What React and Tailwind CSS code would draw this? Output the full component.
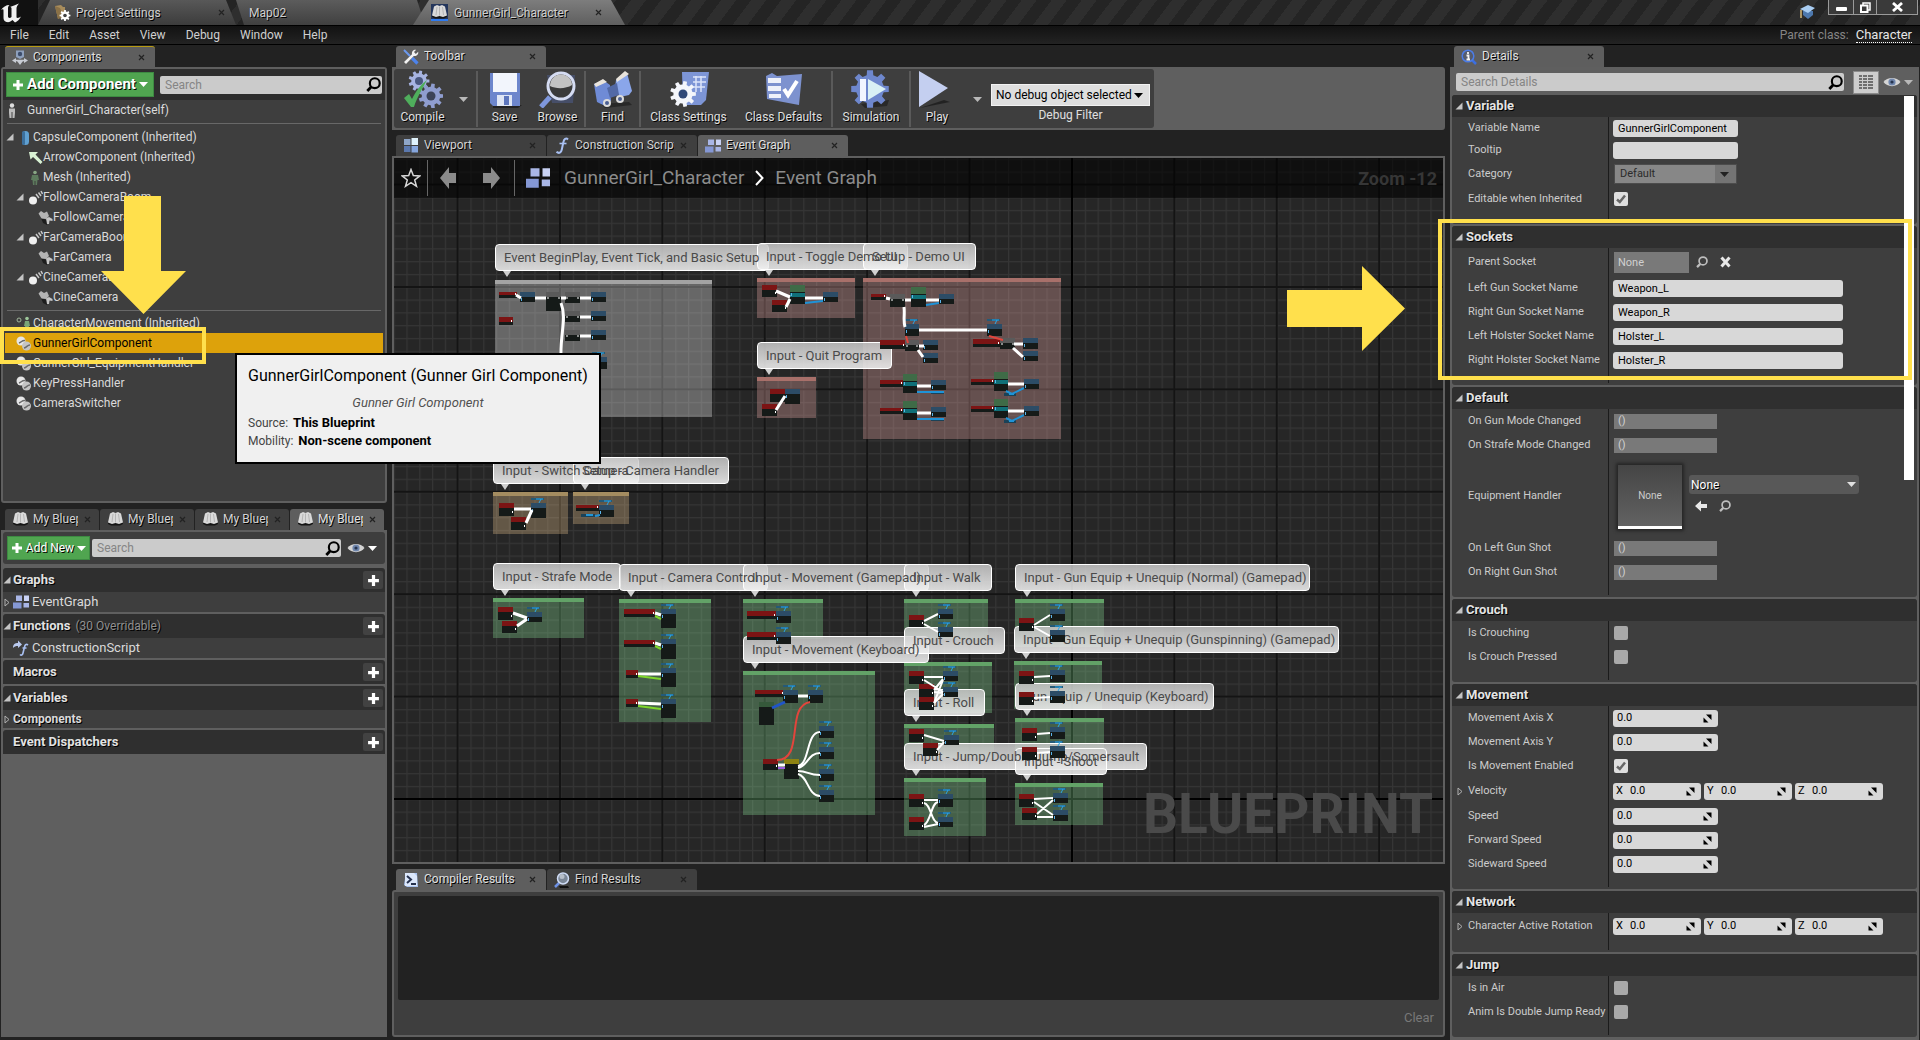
import React from "react";

/* ---------- shared bits ---------- */

const shadow = "[text-shadow:1px_1px_0_#000]";

function gearPath(cx, cy, r, teeth) {
  const pts = [];
  for (let i = 0; i < teeth; i++) {
    const a = (i / teeth) * Math.PI * 2;
    const s = (Math.PI * 2) / teeth;
    [[-0.3, 0.74], [-0.2, 1], [0.2, 1], [0.3, 0.74]].forEach(([o, k]) => {
      pts.push(`${(cx + Math.cos(a + o * s) * r * k).toFixed(2)} ${(cy + Math.sin(a + o * s) * r * k).toFixed(2)}`);
    });
  }
  return `M${pts.join("L")}Z`;
}

function Down({ className = "fill-white" }) {
  return (
    <svg width="9" height="5" viewBox="0 0 9 5" className={`shrink-0 ${className}`} aria-hidden="true">
      <path d="M0 0H9L4.5 5Z" />
    </svg>
  );
}

function Caret({ open }) {
  return open ? (
    <svg width="8" height="8" viewBox="0 0 8 8" className="shrink-0" aria-hidden="true">
      <path d="M7.5 0.5V7.5H0.5Z" fill="#c4c4c4" />
    </svg>
  ) : (
    <svg width="6" height="9" viewBox="0 0 6 9" className="shrink-0" aria-hidden="true">
      <path d="M1 1V8L5 4.500Z" fill="none" stroke="#b0b0b0" />
    </svg>
  );
}

function Magnifier({ size = 14, className = "stroke-black" }) {
  return (
    <svg width={size} height={size} viewBox="0 0 14 14" className={`shrink-0 ${className}`} fill="none" aria-hidden="true">
      <circle cx="8.200" cy="5.800" r="4.600" strokeWidth="2" />
      <path d="M5 9.200L1.200 13" strokeWidth="2.600" />
    </svg>
  );
}

function CloseX() {
  return (
    <button type="button" aria-label="Close tab" className="flex size-[9px] shrink-0 items-center justify-center">
      <svg width="7" height="7" viewBox="0 0 7 7" aria-hidden="true">
        <path d="M1 1L6 6M6 1L1 6" stroke="#222" strokeWidth="1.200" />
      </svg>
    </button>
  );
}

function Plus({ size = 12 }) {
  return (
    <svg width={size} height={size} viewBox="0 0 12 12" className="shrink-0" aria-hidden="true">
      <path d="M4.500 1H7.500V4.500H11V7.500H7.500V11H4.500V7.500H1V4.500H4.500Z" fill="#fff" />
    </svg>
  );
}

function Eye() {
  return (
    <svg width="18" height="12" viewBox="0 0 18 12" className="shrink-0" aria-hidden="true">
      <path d="M0.500 6C4 0.500 14 0.500 17.500 6C14 11.500 4 11.500 0.500 6Z" fill="#d4d4d4" />
      <circle cx="9" cy="6" r="3.600" fill="#6f86ad" />
      <circle cx="9" cy="6" r="1.600" fill="#26344f" />
    </svg>
  );
}

function BookIcon({ boxed }) {
  return (
    <svg width="17" height="17" viewBox="0 0 17 17" className="shrink-0" aria-hidden="true">
      {boxed && <path d="M0 0H17V17H0Z" fill="#24365c" />}
      {boxed && <path d="M0 15H17V17H0Z" fill="#2f7bf0" />}
      <path d="M1 13L4 14.500H13L16 13V11H1Z" fill="#151515" />
      <path d="M3 2.500L6 1L8.500 2L11 1L14 2.500L16 11.500L12 13L8.500 12L5 13L1 11.500Z" fill="#d9d9d9" />
      <path d="M8.500 2.500V11.500M6 3L5 11M11.500 3L12.500 11" stroke="#a5a5a5" strokeWidth="0.700" fill="none" />
    </svg>
  );
}

function GraphIcon({ size = 16 }) {
  return (
    <svg width={size} height={size} viewBox="0 0 16 16" className="shrink-0" aria-hidden="true">
      <path d="M3 1.500H9V7H3Z" fill="#a9b6e6" />
      <path d="M11 1.500H16V7H11Z" fill="#c9d2f4" />
      <path d="M0 8.500H8.500V14.500H0Z" fill="#8497d4" />
      <path d="M10.500 9H16V13.500H10.500Z" fill="#a9b6e6" />
    </svg>
  );
}

function ViewportIcon() {
  return (
    <svg width="14" height="15" viewBox="0 0 14 15" className="shrink-0" aria-hidden="true">
      <path d="M0 1H6.500V7H0Z" fill="#8fa6c8" />
      <path d="M7.500 0H14V7H7.500Z" fill="#dff2fb" />
      <path d="M0 8H6.500V14H0Z" fill="#5b78ad" />
      <path d="M7.500 8H14V14.500H7.500Z" fill="#86a6dd" />
    </svg>
  );
}

function FnIcon() {
  return (
    <svg width="14" height="17" viewBox="0 0 14 17" className="shrink-0" aria-hidden="true">
      <path d="M13 2.500C11 0.500 9 2 8.300 5.500L6.800 12.500C6.300 15.500 4 17 1.500 14.800" fill="none" stroke="#a9c0f2" strokeWidth="2" />
      <path d="M4.500 6.500H11.500" stroke="#a9c0f2" strokeWidth="1.600" />
    </svg>
  );
}

function WrenchIcon() {
  return (
    <svg width="16" height="16" viewBox="0 0 16 16" className="shrink-0" aria-hidden="true">
      <path d="M1 1L7 7" stroke="#6c9af0" strokeWidth="2" />
      <path d="M9 9L14.500 14.500" stroke="#4d83ea" strokeWidth="3.200" />
      <path d="M1 13L9 5.200C8.500 2.500 10.500 0.300 13.200 0.800L11 3L12.800 5L15.200 2.800C15.700 5.500 13.500 7.500 10.800 7L3 15Z" fill="#f2f2f2" />
    </svg>
  );
}

function ComponentsIcon() {
  return (
    <svg width="16" height="15" viewBox="0 0 16 15" className="shrink-0" aria-hidden="true">
      <path d="M4 0.500H12V7L8 9L4 7Z" fill="#8ea0bd" />
      <circle cx="8" cy="4" r="2.200" fill="#3d4d6c" />
      <path d="M0 10.500L4 8V13ZM16 10.500L12 8V13ZM8 15L5 11H11Z" fill="#c8ccd4" />
      <path d="M3 10.500H13" stroke="#c8ccd4" strokeWidth="1.500" />
    </svg>
  );
}

/* ---------- title and menu bars ---------- */

function TitleBar() {
  return (
    <header className="flex h-[25px] shrink-0 items-stretch bg-[repeating-linear-gradient(127deg,#2e2e2e_0px,#2e2e2e_12px,#242424_12px,#242424_24px)] text-[12px] text-[#cfcfcf]">
      <div className="flex w-[38px] items-center bg-[#111]">
        <svg width="24" height="22" viewBox="0 0 24 22" aria-label="Unreal Engine" role="img">
          <path d="M1 8C3 5 6 3 9.500 3C8 4.500 8 5.500 8 7V14.500C8 16 10 16.500 11.500 15V6.500C11.500 5.500 11 5 10 5C12.500 4 15.500 3 19 1.500C17.500 3.500 16.500 4.500 16.500 6.500V15.500C17.500 16.500 19.500 15.500 21 14.500C19.500 17.500 17.500 19.500 15 20.500L12.500 18C11 19.500 9 20.500 6.500 20C4 19.500 3.500 17.500 3.500 15.500V8.500C3.500 7 2.500 7 1 8Z" fill="#f0f0f0" />
        </svg>
      </div>
      <nav className="flex" aria-label="Documents">
        <div className="flex w-[198px] items-center bg-[linear-gradient(#585858,#3c3c3c)] pr-[10px] pl-[16px] [clip-path:polygon(12px_0,188px_0,198px_100%,0_100%)]">
          <svg width="17" height="17" viewBox="0 0 17 17" aria-hidden="true">
            <path d="M1 2L7 1L9 3L11 3V8L4 15Z" fill="#a98d5c" />
            <path d="M1 2L4 15L10 13L6 4Z" fill="#8a7147" />
            <path d={gearPath(11, 11.5, 5.5, 8)} fill="#fff" />
            <circle cx="11" cy="11.500" r="1.800" fill="#444" />
          </svg>
          <a href="#project" className={`ml-[5px] flex-1 ${shadow}`}>Project Settings</a>
          <CloseX />
        </div>
        <div className="-ml-[6px] flex w-[195px] items-center bg-[linear-gradient(#5c5c5c,#404040)] pl-[19px] [clip-path:polygon(6px_0,187px_0,195px_100%,14px_100%)]">
          <a href="#map" className={shadow}>Map02</a>
        </div>
        <div className="-ml-[12px] flex w-[212px] items-center bg-[linear-gradient(#7d7d7d,#5f5f5f)] pr-[22px] pl-[18px] [clip-path:polygon(16px_0,198px_0,212px_100%,0_100%)]">
          <BookIcon boxed />
          <a href="#character" className={`ml-[6px] flex-1 ${shadow}`}>GunnerGirl_Character</a>
          <CloseX />
        </div>
      </nav>
      <div className="ml-auto flex items-start">
        <svg width="18" height="16" viewBox="0 0 18 16" className="mt-[4px] mr-[11px]" aria-hidden="true">
          <path d="M4 7L4 11L9 15L14 11V7Z" fill="#4d78ad" />
          <path d="M1 5L9 1L16 4L9 9Z" fill="#a9cdf2" />
          <path d="M2 6V14" stroke="#d6b878" strokeWidth="1.500" />
        </svg>
        <button type="button" aria-label="Minimize" className="flex h-[15px] w-[26px] items-center justify-center border border-t-0 border-[#9a9a9a] bg-[#3a3a3a]">
          <span className="mt-[3px] block h-[4px] w-[11px] rounded-[1px] bg-white" />
        </button>
        <button type="button" aria-label="Restore" className="flex h-[15px] w-[23px] items-center justify-center border border-t-0 border-l-0 border-[#9a9a9a] bg-[#3a3a3a]">
          <svg width="11" height="11" viewBox="0 0 11 11" fill="none" stroke="#fff" aria-hidden="true">
            <path d="M3 3V1H10V8H8" strokeWidth="1.500" />
            <path d="M1 3.500H7.500V10H1Z" strokeWidth="2" />
          </svg>
        </button>
        <button type="button" aria-label="Close" className="mr-[2px] flex h-[15px] w-[41px] items-center justify-center border border-t-0 border-l-0 border-[#9a9a9a] bg-[#3a3a3a]">
          <svg width="11" height="10" viewBox="0 0 11 10" aria-hidden="true">
            <path d="M1 1L10 9M10 1L1 9" stroke="#fff" strokeWidth="2.800" />
          </svg>
        </button>
      </div>
    </header>
  );
}

function MenuBar() {
  return (
    <div className="flex h-[20px] shrink-0 items-center justify-between border-y border-black bg-[linear-gradient(#121212,#232323)] pr-[8px] pl-[10px] text-[12px] text-[#d0d0d0]">
      <nav className="flex gap-[20px]" aria-label="Main menu">
        {["File", "Edit", "Asset", "View", "Debug", "Window", "Help"].map((m) => (
          <button type="button" key={m}>{m}</button>
        ))}
      </nav>
      <p className="flex items-center gap-[7px] text-[#858585]">
        Parent class:
        <a href="#parent" className="border-b border-dotted border-white text-[13px] leading-[15px] text-[#e6e6e6]">Character</a>
      </p>
    </div>
  );
}

/* ---------- docked tabs ---------- */

function Tab({ icon, label, active, focus, className = "w-[150px] pr-[9px]" }) {
  return (
    <div
      className={`flex h-[21px] items-center gap-[5px] rounded-t-[3px] pl-[7px] text-[12px] ${className} ${
        active ? "bg-[#5e5e5e] text-[#e0e0e0]" : "bg-[#3f3f3f] text-[#d4d4d4]"
      } ${focus ? "border-t border-[#b79a12]" : ""}`}
    >
      <span className="flex w-[16px] shrink-0 justify-center">{icon}</span>
      <button type="button" className={`min-w-0 flex-1 overflow-hidden pb-px text-left leading-[18px] whitespace-nowrap ${shadow}`}>{label}</button>
      <CloseX />
    </div>
  );
}

function Search({ label, className }) {
  return (
    <label className={`flex h-[18px] items-center rounded-[2px] bg-[#cbcbcb] pr-px pl-[5px] ${className}`}>
      <input type="search" aria-label={label} placeholder={label} className="min-w-0 flex-1 bg-transparent text-[12px] leading-[18px] text-black placeholder-[#858585] outline-none" />
      <Magnifier size={15} />
    </label>
  );
}

/* ---------- component tree ---------- */

const treeIcons = {
  capsule: (
    <>
      <rect x="4" y="1" width="7" height="14" rx="3.500" fill="#5f9fd0" />
      <rect x="4" y="1" width="3" height="14" rx="1.500" fill="#3c6f9c" />
    </>
  ),
  arrow: <path d="M1 2L10 2L7.500 4.500L14.500 12L12.500 14L5 7L2.500 9.500Z" fill="#d9f2d4" />,
  mesh: (
    <>
      <circle cx="7" cy="2.500" r="1.800" fill="#88a684" />
      <path d="M4 5H10L11 10H9.500L9 15H7.500V11H6.500V15H5L4.500 10H3Z" fill="#5d7a5d" />
    </>
  ),
  boom: (
    <>
      <circle cx="5" cy="10.500" r="4" fill="#f0f0f0" />
      <path d="M8 4L11 8M10.500 2.500L13 6M13 1L14.500 4" stroke="#c8c8c8" strokeWidth="1.500" />
    </>
  ),
  camera: (
    <>
      <path d="M3 8L9 10V15L5 13Z" fill="#1d1d1d" />
      <path d="M0.500 3.500L3 1L6 3L9 1.500L11 6L8 9L3.500 8.500Z" fill="#b4b4b4" />
      <path d="M8 8.500L11 7L14.500 9V11L11.500 10.500L11 14H9L8.500 11Z" fill="#c6c6c6" />
    </>
  ),
  movement: (
    <>
      <circle cx="3" cy="4" r="2" fill="none" stroke="#9fb59a" />
      <circle cx="11" cy="2.500" r="1.800" fill="#9dc79a" />
      <path d="M9 5H13L14 10H13L12.500 14.500H9.500L9 10H8Z" fill="#79a577" />
    </>
  ),
  script: (
    <>
      <circle cx="5" cy="5" r="4.500" fill="#e6e6e6" />
      <circle cx="10.500" cy="10" r="4.500" fill="#c4c4c4" />
      <path d="M3 7C6 6 6 4 9 4.500M8 12C11 11.500 11 9 14 9" stroke="#6b6b6b" fill="none" strokeWidth="1.500" />
    </>
  ),
  self: (
    <>
      <circle cx="7" cy="2.500" r="2.200" fill="#ddd" />
      <path d="M4 5.500H10V10L9.500 15H4.500L4 10Z" fill="#bbb" />
      <path d="M7 9V15" stroke="#444" />
    </>
  ),
};

function TreeIcon({ name }) {
  return (
    <svg width="15" height="15" viewBox="0 0 15 15" className="shrink-0" aria-hidden="true">{treeIcons[name]}</svg>
  );
}

const tree = [
  ["capsule", "CapsuleComponent (Inherited)", "pl-[1px]", true],
  ["arrow", "ArrowComponent (Inherited)", "pl-[11px]", false],
  ["mesh", "Mesh (Inherited)", "pl-[11px]", false],
  ["boom", "FollowCameraBoom", "pl-[11px]", true],
  ["camera", "FollowCamera", "pl-[21px]", false],
  ["boom", "FarCameraBoom", "pl-[11px]", true],
  ["camera", "FarCamera", "pl-[21px]", false],
  ["boom", "CineCameraBoom", "pl-[11px]", true],
  ["camera", "CineCamera", "pl-[21px]", false],
];

const actors = [
  ["movement", "CharacterMovement (Inherited)"],
  ["script", "GunnerGirlComponent"],
  ["script", "GunnerGirl_EquipmentHandler"],
  ["script", "KeyPressHandler"],
  ["script", "CameraSwitcher"],
];

function ComponentsPanel() {
  return (
    <section className="relative flex flex-[457_1_0%] flex-col">
      <div className="flex pl-[4px]">
        <Tab active focus icon={<ComponentsIcon />} label="Components" />
      </div>
      <div className="flex flex-1 flex-col rounded-[3px] border-2 border-[#5f5f5f] bg-[#3e3e3e] text-[12px] text-[#dadada]">
        <div className="flex h-[31px] items-center gap-[6px] bg-[#2e2e2e] px-[3px]">
          <button type="button" className={`flex h-[25px] w-[148px] items-center justify-center gap-[3px] border border-[#3d8a42] bg-[#50a550] text-[15px] font-bold whitespace-nowrap text-white ${shadow}`}>
            <Plus />Add Component<Down />
          </button>
          <Search label="Search" className="flex-1" />
        </div>
        <div className="flex h-[20px] items-center gap-[7px] pl-[2px]">
          <TreeIcon name="self" />GunnerGirl_Character(self)
        </div>
        <hr className="mx-[4px] my-[3px] border-[#686868]" />
        <ul>
          {tree.map(([icon, name, pad, open]) => (
            <li key={name} className={`flex h-[20px] items-center ${pad}`}>
              <span className="mr-[2px] flex w-[12px] justify-center">{open && <Caret open />}</span>
              <TreeIcon name={icon} />{name}
            </li>
          ))}
        </ul>
        <hr className="mx-[4px] mt-[3px] mb-[2px] border-[#686868]" />
        <ul>
          {actors.map(([icon, name], i) => (
            <li key={name} className={`mx-[2px] flex h-[20px] items-center gap-[2px] pl-[11px] ${i === 1 ? "bg-[#dda20b] text-black" : ""}`}>
              <TreeIcon name={icon} />{name}
            </li>
          ))}
        </ul>
      </div>

      <svg width="85" height="118" viewBox="0 0 85 118" className="absolute top-[150px] left-[100px] z-10" aria-hidden="true">
        <path d="M23 0H60V75H85L42.500 118L0 75H23Z" fill="#ffe04c" />
      </svg>
      <div className="absolute top-[281px] -left-px z-10 h-[37px] w-[206px] border-4 border-[#ffe04c]" />
      <aside role="tooltip" className="absolute top-[307px] left-[234px] z-20 h-[111px] w-[366px] border-2 border-black bg-[#f0f0f0] px-[11px] pt-[9px] text-black">
        <h2 className="text-[16px] leading-[24px] whitespace-nowrap">GunnerGirlComponent (Gunner Girl Component)</h2>
        <p className="mt-[5px] text-center text-[13px] leading-[20px] text-[#505050] italic">Gunner Girl Component</p>
        <dl className="mt-px text-[12px] leading-[18px]">
          <div className="flex gap-[5px]"><dt className="text-[#444]">Source:</dt><dd className="text-[13px] font-bold">This Blueprint</dd></div>
          <div className="flex gap-[5px]"><dt className="text-[#444]">Mobility:</dt><dd className="text-[13px] font-bold">Non-scene component</dd></div>
        </dl>
      </aside>
    </section>
  );
}

/* ---------- my blueprint ---------- */

function Category({ title, note, open, children, add = true }) {
  return (
    <section className="mb-[2px]">
      <h3 className={`flex h-[24px] items-center gap-[2px] rounded-t-[3px] bg-[#2f2f2f] pr-[2px] text-[13px] font-bold text-[#e2e2e2] ${shadow}`}>
        <span className="w-[8px]">{open && <Caret open />}</span>
        {title}
        {note && <span className="ml-[3px] text-[12px] font-normal text-[#8f8f8f]">{note}</span>}
        {add && (
          <button type="button" aria-label={`Add ${title}`} className="ml-auto flex h-[18px] w-[20px] items-center justify-center rounded-[2px] bg-[#424242]">
            <Plus size={13} />
          </button>
        )}
      </h3>
      {children}
    </section>
  );
}

function MyBlueprintPanel() {
  return (
    <section className="flex flex-[528_1_0%] flex-col">
      <div className="flex gap-px pl-[4px]">
        {[0, 1, 2, 3].map((i) => (
          <Tab key={i} active={i === 3} icon={<BookIcon />} label="My Blueprint" className="w-[94px] pr-[7px]" />
        ))}
      </div>
      <div className="flex-1 border-2 border-[#5f5f5f] bg-[#5f5f5f] text-[13px] text-[#dadada]">
        <div className="mb-[4px] flex h-[32px] items-center rounded-[3px] bg-[#3e3e3e] pr-[8px] pl-[4px]">
          <button type="button" className={`flex h-[24px] w-[83px] shrink-0 items-center justify-center gap-[3px] border border-[#3d8a42] bg-[#50a550] text-[12px] whitespace-nowrap text-white ${shadow}`}>
            <Plus />Add New<Down />
          </button>
          <Search label="Search" className="ml-[2px] flex-1" />
          <button type="button" aria-label="View options" className="ml-[6px] flex items-center gap-[3px]">
            <Eye /><Down />
          </button>
        </div>
        <Category title="Graphs" open>
          <div className="flex h-[20px] items-center gap-[3px] bg-[#3e3e3e] pl-px"><Caret /><GraphIcon /><span>EventGraph</span></div>
        </Category>
        <Category title="Functions" note="(30 Overridable)" open>
          <div className="flex h-[20px] items-center gap-[3px] bg-[#3e3e3e] pl-[9px]">
            <svg width="17" height="16" viewBox="0 0 17 16" aria-hidden="true">
              <path d="M1 8C1 4 3 3 6 3V0.500L10 4.500L6 8V6C3.500 6 2.500 6.500 1 8Z" fill="#b9c9ee" />
              <path d="M16 5C14 3.500 13 5 12.500 7L11 13C10.500 15.500 9 15.500 8 14.500M10.500 8H14.500" fill="none" stroke="#a9c0f2" strokeWidth="1.600" />
            </svg>
            <span>ConstructionScript</span>
          </div>
        </Category>
        <Category title="Macros" />
        <Category title="Variables" open>
          <div className="flex h-[18px] items-center gap-[3px] bg-[#3e3e3e] pl-px text-[12px] font-bold"><Caret /><span className={shadow}>Components</span></div>
        </Category>
        <Category title="Event Dispatchers" />
      </div>
    </section>
  );
}

/* ---------- toolbar ---------- */

const toolArt = {
  compile: (
    <>
      <path d={gearPath(16, 11, 10.5, 9)} fill="#a7b4e2" />
      <circle cx="16" cy="11" r="4" fill="#4a587f" />
      <path d={gearPath(28, 26, 12.5, 9)} fill="#8f9dcf" />
      <circle cx="28" cy="26" r="4.500" fill="#3c4358" />
      <path d="M1 28L6 24L9 29C13 21 18 14 24 10C20 18 14 27 11 37H8Z" fill="#4fae5c" />
    </>
  ),
  save: (
    <>
      <path d="M8 35H37L33 38H8Z" fill="#111" opacity="0.600" />
      <path d="M5 3H35V36H8L5 33Z" fill="#6d86cc" />
      <path d="M8 3H32V22H8Z" fill="#f2f5fc" />
      <path d="M12 25H27V36H12Z" fill="#dfe6f5" />
      <path d="M19 26H24V35H19Z" fill="#5d76bd" />
    </>
  ),
  browse: (
    <>
      <path d="M9 5H37L35 33H14Z" fill="#4a567a" opacity="0.700" />
      <path d="M12 27L3 37" stroke="#7e97dd" strokeWidth="5" />
      <circle cx="23" cy="16" r="13" fill="#3a3a3a" stroke="#d5dcf2" strokeWidth="3" />
      <path d="M12 16C12 9 17 4.500 23 4.500S34 9 34 15C28 19 18 19 12 16Z" fill="#c3c3c3" />
    </>
  ),
  find: (
    <>
      <path d="M8 34L36 32L39 35L12 38Z" fill="#111" opacity="0.500" />
      <path d="M1 14L10 10L17 15L18 31L10 35L4 32Z" fill="#6f8bd6" />
      <path d="M23 10L34 3L39 21L36 25L27 27L22 18Z" fill="#8aa6ea" />
      <path d="M14 18L24 13L26 25L17 28Z" fill="#5269a6" />
      <path d="M1 14L10 9L14 12L3 17ZM23 9L32 1L36 4L24 12Z" fill="#e9e4dc" />
      <circle cx="14" cy="33" r="4" fill="#dcdcdc" /><circle cx="27" cy="29" r="4" fill="#dcdcdc" />
      <circle cx="14" cy="33" r="2" fill="#4b5f92" /><circle cx="27" cy="29" r="2" fill="#4b5f92" />
    </>
  ),
  settings: (
    <>
      <path d="M13 2H40L37 30L32 35H14Z" fill="#7d95d6" />
      <path d="M24 7H37M24 12H37M24 17H36M27 6V22M32 6V22" stroke="#dbe4fa" strokeWidth="1.500" />
      <path d={gearPath(14, 24, 13, 9)} fill="#f4f6fb" />
      <circle cx="14" cy="24" r="4.500" fill="#2f4878" />
    </>
  ),
  defaults: (
    <>
      <path d="M2 6L8 3L13 6L38 4L35 35L3 29Z" fill="#7d92cf" />
      <path d="M4 8H17V13H4ZM4 16H17V21H4ZM5 24H17V28H5Z" fill="#eef1fa" />
      <path d="M20 19L24 25L33 11" fill="none" stroke="#fff" strokeWidth="4" />
    </>
  ),
  simulation: (
    <>
      <path d="M10 34L38 30L36 36L14 38Z" fill="#111" opacity="0.500" />
      <path d={gearPath(19, 19, 19, 8)} fill="#6e87cd" />
      <path d="M9 9H15V31H9Z" fill="#f1f5ff" />
      <path d="M17 9L35 19L17 30Z" fill="#d9f0f5" />
    </>
  ),
  play: (
    <>
      <path d="M3 38L33 32L27 30Z" fill="#111" opacity="0.600" />
      <path d="M2 1L31 18L2 37Z" fill="#c4cff0" />
    </>
  ),
};

function Tool({ art, label, className }) {
  return (
    <button type="button" className={`flex flex-col items-center ${className}`}>
      <svg width="40" height="38" viewBox="0 0 40 38" aria-hidden="true">{toolArt[art]}</svg>
      <span className={`text-[12px] leading-[18px] whitespace-nowrap ${shadow}`}>{label}</span>
    </button>
  );
}

function Rule() {
  return <span className="my-px w-[2px] bg-[#5a5a5a]" />;
}

function MoreButton({ label, className }) {
  return (
    <button type="button" aria-label={label} className={`flex items-center justify-center ${className}`}>
      <Down className="fill-[#b8b8b8]" />
    </button>
  );
}

function ToolbarPanel() {
  return (
    <section className="flex flex-col">
      <div className="flex pl-[4px]"><Tab active icon={<WrenchIcon />} label="Toolbar" /></div>
      <div className="flex rounded-r-[3px] border-2 border-[#5f5f5f] bg-[#5f5f5f]">
        <div className="flex h-[59px] rounded-[3px] bg-[#3e3e3e] pt-px text-[#e0e0e0]">
          <Tool art="compile" label="Compile" className="w-[57px]" />
          <MoreButton label="Compile options" className="w-[25px]" />
          <Rule />
          <Tool art="save" label="Save" className="w-[53px]" />
          <Tool art="browse" label="Browse" className="w-[53px]" />
          <Rule />
          <Tool art="find" label="Find" className="w-[53px]" />
          <Rule />
          <Tool art="settings" label="Class Settings" className="w-[95px]" />
          <Tool art="defaults" label="Class Defaults" className="w-[95px]" />
          <Rule />
          <Tool art="simulation" label="Simulation" className="w-[76px]" />
          <Rule />
          <Tool art="play" label="Play" className="w-[52px]" />
          <MoreButton label="Play options" className="ml-[7px] w-[14px]" />
          <div className="mr-[4px] ml-[7px] flex flex-col items-center pt-[14px]">
            <div className="relative flex items-center">
              <select id="debug-filter" className="h-[22px] w-[159px] appearance-none border border-[#f2f2f2] bg-[#dedede] pl-[4px] text-[12px] text-black">
                <option>No debug object selected</option>
              </select>
              <Down className="pointer-events-none absolute right-[7px] fill-black" />
            </div>
            <label htmlFor="debug-filter" className="text-[12px] leading-[18px]">Debug Filter</label>
          </div>
        </div>
      </div>
    </section>
  );
}

/* ---------- event graph ---------- */

/* World position of the canvas's top left corner. */
const PAN = { x: 394, y: 158 };

const NOTE = { gray: ["#ffffff", "#a3a3a3"], red: ["#f8b2b0", "#a8706a"], tan: ["#f1c991", "#a48c60"], green: ["#90e89c", "#62a267"] };

/* tint, x, y, width, height */
const comments = [
  ["gray", 495, 280, 217, 137], ["red", 757, 278, 98, 40], ["red", 863, 278, 198, 161], ["red", 757, 377, 59, 41],
  ["tan", 493, 492, 75, 42], ["tan", 573, 492, 56, 32], ["green", 493, 598, 91, 40], ["green", 619, 599, 92, 123],
  ["green", 743, 599, 80, 40], ["green", 743, 671, 132, 144], ["green", 904, 599, 84, 40], ["green", 904, 662, 88, 51],
  ["green", 904, 724, 90, 34], ["green", 904, 778, 82, 58], ["green", 1015, 599, 89, 48], ["green", 1014, 661, 88, 48],
  ["green", 1015, 718, 89, 42], ["green", 1015, 783, 88, 42],
];

/* text, x, y, width */
const bubbles = [
  ["Event BeginPlay, Event Tick, and Basic Setup", 495, 244, 274], ["Input - Toggle Demo UI", 757, 243, 151],
  ["Setup - Demo UI", 863, 243, 113], ["Input - Quit Program", 757, 342, 135],
  ["Input - Switch Camera", 493, 457, 146], ["Setup - Camera Handler", 573, 457, 156],
  ["Input - Strafe Mode", 493, 563, 128], ["Input - Camera Control", 619, 564, 149],
  ["Input - Movement (Gamepad)", 743, 564, 186], ["Input - Walk", 904, 564, 88],
  ["Input - Movement (Keyboard)", 743, 636, 186], ["Input - Crouch", 904, 627, 101],
  ["Input - Roll", 904, 689, 81], ["Input - Jump/Double Jump/Somersault", 904, 743, 243],
  ["Input - Gun Equip + Unequip (Normal) (Gamepad)", 1015, 564, 295],
  ["Input - Gun Equip + Unequip (Gunspinning) (Gamepad)", 1014, 626, 325],
  ["Gun Equip / Unequip (Keyboard)", 1015, 683, 199], ["Input - Shoot", 1015, 748, 92],
];

/* kind, x, y, width, height; kinds: r event, b call, p call with a target above, g flow, c cast, k getter, y switch, n input */
const nodes = [
  ["r", 499, 292, 18, 6], ["b", 520, 292, 15, 10], ["g", 546, 292, 15, 19], ["g", 565, 292, 15, 11], ["b", 591, 292, 15, 10],
  ["g", 565, 311, 15, 11], ["b", 591, 311, 15, 10], ["g", 565, 330, 15, 11], ["b", 591, 330, 15, 10], ["r", 499, 317, 14, 8], ["p", 592, 357, 15, 12],
  ["r", 762, 285, 15, 12], ["r", 772, 300, 15, 12], ["c", 790, 285, 15, 19], ["b", 823, 292, 15, 10],
  ["r", 871, 294, 15, 6], ["g", 890, 294, 15, 13], ["c", 911, 287, 15, 20], ["b", 939, 294, 15, 10],
  ["p", 905, 324, 14, 12], ["p", 987, 324, 15, 12],
  ["r", 880, 340, 25, 9], ["g", 905, 340, 14, 11], ["b", 923, 340, 15, 10], ["b", 923, 353, 15, 10],
  ["r", 973, 339, 27, 8], ["g", 1000, 338, 15, 11], ["b", 1023, 338, 15, 11], ["b", 1023, 351, 15, 10],
  ["r", 880, 380, 23, 7], ["c", 903, 374, 14, 19], ["b", 931, 380, 15, 10], ["k", 931, 391, 13, 3],
  ["r", 971, 379, 23, 6], ["c", 994, 372, 14, 19], ["b", 1024, 379, 15, 10], ["k", 1004, 393, 12, 3],
  ["r", 880, 408, 23, 6], ["c", 903, 401, 14, 19], ["b", 931, 407, 15, 10], ["k", 931, 418, 13, 3],
  ["r", 971, 406, 23, 6], ["c", 994, 399, 14, 19], ["b", 1024, 406, 15, 10], ["k", 1004, 420, 12, 3],
  ["r", 770, 389, 15, 13], ["b", 785, 389, 15, 15], ["r", 762, 404, 15, 12],
  ["r", 499, 503, 15, 13], ["r", 511, 517, 15, 13], ["p", 531, 503, 15, 15],
  ["r", 576, 505, 23, 6], ["p", 599, 505, 15, 12], ["k", 581, 514, 14, 3],
  ["r", 498, 607, 15, 13], ["r", 502, 621, 15, 12], ["p", 527, 612, 15, 10],
  ["r", 624, 609, 31, 8], ["p", 661, 609, 15, 19], ["r", 624, 640, 31, 7], ["p", 661, 639, 15, 20],
  ["r", 626, 670, 12, 8], ["p", 661, 668, 15, 19], ["r", 626, 699, 12, 8], ["p", 661, 699, 15, 19],
  ["r", 747, 611, 29, 8], ["p", 776, 611, 15, 12], ["r", 747, 632, 29, 8], ["p", 776, 632, 15, 12],
  ["r", 755, 690, 29, 7], ["p", 783, 690, 15, 13], ["p", 808, 690, 15, 13], ["n", 759, 702, 15, 23],
  ["r", 763, 759, 15, 11], ["y", 784, 759, 15, 20], ["p", 819, 726, 15, 12], ["p", 819, 747, 15, 12], ["p", 819, 769, 15, 12], ["p", 819, 790, 15, 12],
  ["r", 909, 615, 15, 12], ["p", 938, 609, 15, 10], ["p", 938, 627, 15, 10],
  ["r", 909, 671, 15, 13], ["r", 919, 684, 15, 13], ["r", 919, 697, 15, 13], ["p", 943, 671, 15, 10], ["p", 943, 687, 15, 10],
  ["r", 909, 729, 15, 13], ["r", 923, 743, 15, 13], ["p", 944, 735, 15, 10],
  ["r", 909, 794, 15, 13], ["r", 909, 817, 15, 13], ["p", 938, 794, 15, 13], ["p", 938, 817, 15, 10],
  ["r", 1019, 618, 15, 13], ["p", 1050, 609, 15, 12], ["p", 1050, 630, 15, 12],
  ["r", 1019, 671, 15, 13], ["p", 1050, 670, 15, 12], ["r", 1019, 692, 15, 13], ["p", 1050, 691, 15, 12],
  ["r", 1022, 728, 15, 13], ["p", 1050, 727, 15, 12], ["r", 1022, 747, 15, 13], ["p", 1050, 746, 15, 12],
  ["r", 1019, 794, 15, 13], ["r", 1022, 808, 15, 12], ["p", 1053, 793, 15, 10], ["p", 1053, 810, 15, 11],
];

const HEAD = { r: "#7c1414", b: "#2c4c66", p: "#2c4c66", g: "#5a5a5a", c: "#3f6b47", y: "#8d8212", n: "#35583a" };

/* color, stroke width, path */
const wires = [
  ["#fff", 3, "M516 295L521 298M535 298H546M561 298H566M580 298H591M580 317H591M580 336H591M561 303C567 318 560 335 561 357M776 291L790 297M786 307L790 299M805 298H823M886 298L890 299M905 300H911M926 300H939M904 307C905 315 903 320 905 327M919 330H987M919 346H924M918 350L923 357M1014 344H1023M1013 348L1023 357M917 386H931M1008 384H1024M917 413H931M1008 411H1024M776 410L785 396"],
  ["#fff", 3, "M514 509H531M526 523L532 510M513 613L527 618M517 626L527 619M655 613L661 615M655 643L661 645M638 674H661M638 703L661 704M798 696H808M778 765H785"],
  ["#fff", 2, "M798 766C810 764 806 732 820 732M798 768C808 766 808 753 820 753M798 771C808 771 808 775 820 775M798 774C808 776 808 796 820 796"],
  ["#fff", 2, "M924 621L938 614M924 624L938 632M924 677H943M924 680L943 692M934 690L943 679M934 692L943 693M934 703L943 680M934 703L943 694M924 735L944 741M937 750L944 742M924 800H938M924 803C931 804 931 822 938 823M924 825C931 822 931 803 938 802M924 827L938 824M1034 625L1050 615M1034 627L1050 636M1034 677L1050 676M1034 698L1050 697M1037 734L1050 733M1037 753L1050 752M1034 799L1053 798M1034 802L1053 815M1037 814L1053 800M1037 817H1053"],
  ["#1e93d8", 2, "M805 303L823 301M926 305L939 303M917 392H944M1006 391L1012 394L1024 388M917 419H944M1006 418L1012 421L1024 415M595 516L600 515"],
  ["#7fd62c", 2, "M655 616L661 619M655 646L661 649M638 676L661 679M638 706L661 709"],
  ["#e2453c", 2, "M810 702C785 706 805 760 777 760M906 336L908 343M989 336L1003 340"],
  ["#1f55c8", 3, "M772 708L785 702"],
  ["#9b5de0", 2, "M778 768H785"],
];

function GraphNode({ kind, x, y, w, h }) {
  if (kind === "k") {
    return (
      <g>
        <rect x={x} y={y} width={w} height={h} fill="#1b4257" />
        <rect x={x + 5} y={y} width={w - 7} height="2" fill="#2296d6" />
      </g>
    );
  }
  const head = kind === "c" ? 7 : Math.min(5, h - 3);
  return (
    <g>
      {kind === "p" && (
        <>
          <rect x={x} y={y - 5} width="13" height="2" fill="#245a78" />
          <path d={`M${x + 5} ${y - 4}H${x + 12}M${x + 10} ${y - 4}L${x + 8} ${y}`} stroke="#2ba6e8" fill="none" />
        </>
      )}
      <rect x={x} y={y} width={w} height={h} fill="#151a18" />
      <rect x={x} y={y} width={w} height={head} fill={HEAD[kind]} />
      {kind === "c" && <rect x={x} y={y + 8} width={w} height="4" fill="#107078" />}
      {(kind === "b" || kind === "p" || kind === "c") && <rect x={x + 1} y={y + head + 1} width="1" height="3" fill="#59b4ea" />}
      {kind === "r" && <rect x={x + w - 2} y={y + h - 5} width="1" height="2" fill="#fff" />}
      {kind === "g" && <path d={`M${x + 1} ${y + 6}h2M${x + w - 3} ${y + 6}h2`} stroke="#fff" />}
    </g>
  );
}

function GraphCanvas() {
  return (
    <div className="relative flex-1 overflow-hidden bg-[#262626]">
      <svg className="absolute inset-0 size-full" aria-hidden="true">
        <defs>
          <pattern id="minor" width="12.800" height="12.800" patternUnits="userSpaceOnUse" x="1072" y="798.700">
            <path d="M0 0.500H12.800M0.500 0V12.800" stroke="#353535" strokeWidth="1.400" />
          </pattern>
          <pattern id="major" width="102.400" height="102.400" patternUnits="userSpaceOnUse" x="1071" y="798">
            <path d="M0 1H102.400M1 0V102.400" stroke="#141414" strokeWidth="2" />
          </pattern>
        </defs>
        <g transform={`translate(${-PAN.x} ${-PAN.y})`}>
          <rect x="0" y="0" width="4000" height="3000" fill="url(#minor)" />
          <rect x="0" y="0" width="4000" height="3000" fill="url(#major)" />
          <path d="M1072 0V3000M0 799H4000" stroke="#000" strokeWidth="2" />
          {comments.map(([tint, x, y, w, h]) => (
            <g key={`${x}-${y}`}>
              <rect x={x} y={y} width={w} height={h} fill={NOTE[tint][0]} fillOpacity="0.300" />
              <rect x={x} y={y} width={w} height="4" fill={NOTE[tint][1]} />
            </g>
          ))}
        </g>
      </svg>
      <p className="absolute right-[10px] bottom-[16px] text-[55px] leading-[64px] font-bold text-[#4a4a4a]">BLUEPRINT</p>
      {bubbles.map(([text, x, y, w]) => (
        <div key={text} className="absolute" style={{ left: x - PAN.x, top: y - PAN.y, width: w }}>
          <div className="h-[27px] rounded-[4px] border border-white bg-[linear-gradient(rgba(200,200,200,0.85),rgba(240,240,240,0.88))]" />
          <svg width="8" height="6" viewBox="0 0 8 6" className="ml-[8px]" aria-hidden="true"><path d="M0 0H8L4 6Z" fill="#d0d0d0" /></svg>
        </div>
      ))}
      {bubbles.map(([text, x, y]) => (
        <p key={text} className="absolute px-[9px] text-[13px] leading-[27px] whitespace-nowrap text-[#4a4a4a]" style={{ left: x - PAN.x, top: y - PAN.y }}>{text}</p>
      ))}
      <svg className="absolute inset-0 size-full" aria-hidden="true">
        <g transform={`translate(${-PAN.x} ${-PAN.y})`}>
          {nodes.map(([kind, x, y, w, h]) => <GraphNode key={`${x}-${y}`} kind={kind} x={x} y={y} w={w} h={h} />)}
          {wires.map(([color, width, d]) => <path key={d} d={d} fill="none" stroke={color} strokeWidth={width} />)}
        </g>
      </svg>
      <div className="absolute inset-x-0 top-0 flex h-[40px] items-center bg-black/60 pr-[6px] text-[19px] text-[#8c8c8c]">
        <button type="button" aria-label="Favorite" className="ml-[7px]">
          <svg width="20" height="20" viewBox="0 0 20 20" aria-hidden="true">
            <path d="M10 1.500L12.300 7.600L18.800 7.900L13.700 12L15.500 18.300L10 14.700L4.500 18.300L6.300 12L1.200 7.900L7.700 7.600Z" fill="none" stroke="#d8d8d8" strokeWidth="1.500" />
          </svg>
        </button>
        <span className="ml-[6px] h-[36px] w-px bg-[#666]" />
        <button type="button" aria-label="Back" className="ml-[12px]">
          <svg width="17" height="22" viewBox="0 0 17 22" aria-hidden="true"><path d="M0 11L9 0V6H16V16H9V22Z" fill="#8b8b8b" /></svg>
        </button>
        <button type="button" aria-label="Forward" className="ml-[26px]">
          <svg width="17" height="22" viewBox="0 0 17 22" aria-hidden="true"><path d="M17 11L8 0V6H0V16H8V22Z" fill="#8b8b8b" /></svg>
        </button>
        <span className="ml-[14px] h-[36px] w-px bg-[#666]" />
        <span className="ml-[11px]"><GraphIcon size={24} /></span>
        <a href="#character" className="ml-[14px]">GunnerGirl_Character</a>
        <svg width="9" height="16" viewBox="0 0 9 16" className="mr-[11px] ml-[11px]" aria-hidden="true"><path d="M1 1L7.500 8L1 15" fill="none" stroke="#fff" strokeWidth="2" /></svg>
        <a href="#graph">Event Graph</a>
        <span className="ml-auto text-[18px] font-bold text-[#363636]">Zoom -12</span>
      </div>
    </div>
  );
}

function GraphPanel() {
  return (
    <section className="flex min-h-0 flex-1 flex-col">
      <div className="flex gap-px pl-[4px]">
        <Tab icon={<ViewportIcon />} label="Viewport" />
        <Tab icon={<FnIcon />} label="Construction Script" />
        <Tab active icon={<GraphIcon />} label="Event Graph" />
      </div>
      <div className="flex flex-1 border-2 border-[#5f5f5f]"><GraphCanvas /></div>
    </section>
  );
}

function ResultsPanel() {
  return (
    <section className="flex h-[168px] shrink-0 flex-col">
      <div className="flex gap-px pl-[4px]">
        <Tab
          active
          label="Compiler Results"
          icon={
            <svg width="14" height="16" viewBox="0 0 14 16" className="shrink-0" aria-hidden="true">
              <path d="M2 1H13L14 15H3L0 13Z" fill="#a9c3f0" />
              <path d="M1 1H10L13 4V14H1Z" fill="#dbe7fb" />
              <path d="M3 4L7 7.500L3 11M7 12H12" fill="none" stroke="#26324f" strokeWidth="2" />
            </svg>
          }
        />
        <Tab
          label="Find Results"
          icon={
            <svg width="16" height="16" viewBox="0 0 16 16" className="shrink-0" aria-hidden="true">
              <path d="M5 14H14L15 16H6Z" fill="#111" />
              <path d="M5 11L1 15" stroke="#6f93e6" strokeWidth="2.500" />
              <circle cx="9" cy="6.500" r="5.500" fill="#7b8797" stroke="#cfdcf6" strokeWidth="1.500" />
              <circle cx="8" cy="4.500" r="2.500" fill="#b6bec9" />
            </svg>
          }
        />
      </div>
      <div className="flex flex-1 flex-col rounded-[3px] border-2 border-[#5f5f5f] bg-[#3e3e3e] px-[4px] pt-[4px]">
        <div className="flex-1 rounded-[2px] bg-[#222]" role="log" />
        <button type="button" className="mr-[5px] self-end text-[13px] leading-[35px] text-[#787878]">Clear</button>
      </div>
    </section>
  );
}

/* ---------- details ---------- */

function Section({ title, children }) {
  return (
    <section className="mb-[2px] overflow-hidden rounded-[3px] bg-[#3e3e3e]">
      <h3 className={`flex h-[22px] items-center gap-[3px] bg-[#2f2f2f] pl-[3px] text-[13px] font-bold text-[#e4e4e4] ${shadow}`}>
        <Caret open />{title}
      </h3>
      {children}
      <div className="flex h-[11px] pl-[156px]"><span className="w-px bg-[#1b1b1b]" /></div>
      <div className="h-[2px]" />
    </section>
  );
}

function Row({ label, id, height = "h-[24px]", expand, children }) {
  return (
    <div className={`flex ${height}`}>
      <div className="flex w-[157px] shrink-0 items-center border-r border-r-[#1b1b1b] pl-[5px]">
        <span className="w-[11px] shrink-0">{expand && <Caret />}</span>
        <label htmlFor={id} className="text-[11px] whitespace-nowrap">{label}</label>
      </div>
      <div className="flex flex-1 items-center pl-[4px]">{children}</div>
    </div>
  );
}

function TextBox({ id, value, width }) {
  return <input id={id} defaultValue={value} className={`h-[17px] rounded-[3px] bg-[#d8d8d8] px-[5px] text-[11px] text-black outline-none ${width}`} />;
}

function ReadOnly({ id, value, size }) {
  return <input id={id} readOnly defaultValue={value} className={`ml-px bg-[#797979] pl-[4px] text-[11px] text-[#d0d0d0] outline-none ${size}`} />;
}

function Check({ id, on }) {
  return (
    <span className="relative ml-px flex size-[14px]">
      <input id={id} type="checkbox" defaultChecked={on} className="size-[14px] appearance-none rounded-[2px] bg-[#a9a9a9] checked:bg-[#dedede]" />
      {on && (
        <svg width="10" height="10" viewBox="0 0 10 10" className="pointer-events-none absolute top-[2px] left-[2px]" aria-hidden="true">
          <path d="M1 5.500L3.800 8L9 1.500" fill="none" stroke="#666" strokeWidth="2.500" />
        </svg>
      )}
    </span>
  );
}

function NumberBox({ id, axis, label, width }) {
  return (
    <span className={`flex h-[17px] items-center rounded-[3px] bg-[#d8d8d8] pr-[6px] pl-[3px] text-[11px] text-black ${width}`}>
      {axis && <span className="w-[13px]">{axis}</span>}
      <input id={id} aria-label={label} defaultValue="0.0" className="min-w-0 flex-1 bg-transparent pl-px outline-none" />
      <svg width="9" height="9" viewBox="0 0 9 9" className="shrink-0" aria-hidden="true">
        <path d="M3 0.500H8.500V6ZM0.500 3.500V8.500H5.500Z" fill="#000" />
      </svg>
    </span>
  );
}

function Vector({ id, name }) {
  return (
    <div className="flex gap-[3px]">
      {["X", "Y", "Z"].map((a) => (
        <NumberBox key={a} axis={a} id={a === "X" ? id : undefined} label={`${name} ${a}`} width="w-[88px]" />
      ))}
    </div>
  );
}

function DetailsPanel() {
  return (
    <section className="relative flex w-[469px] shrink-0 flex-col">
      <div className="flex pl-[4px]">
        <Tab
          active
          label="Details"
          icon={
            <svg width="16" height="16" viewBox="0 0 16 16" className="shrink-0" aria-hidden="true">
              <path d="M10.500 10.500L15 15" stroke="#3c6fe0" strokeWidth="2.500" />
              <circle cx="7" cy="7" r="5.800" fill="#555c6e" stroke="#4c7ce6" strokeWidth="1.500" />
              <path d="M7 3V5M5.500 6.500H7.500V10.500M5.500 10.500H9" stroke="#f4f4f4" strokeWidth="1.800" fill="none" />
            </svg>
          }
        />
      </div>
      <div className="flex-1 border-2 border-[#5f5f5f] bg-[#5f5f5f] text-[12px] text-[#cccccc]">
        <div className="flex h-[26px] items-center pr-[4px] pl-[4px]">
          <Search label="Search Details" className="flex-1" />
          <button type="button" aria-label="Property matrix" className="ml-[9px] flex h-[23px] w-[26px] items-center justify-center border border-[#8b8b8b] bg-[#cdcdcd]">
            <svg width="14" height="14" viewBox="0 0 14 14" aria-hidden="true">
              <path d="M0 1H14M0 4H14M0 7H14M0 10H14M0 13H14" stroke="#6f6f6f" strokeWidth="2" strokeDasharray="3 1 4 1 5 1" />
            </svg>
          </button>
          <button type="button" aria-label="View options" className="ml-[4px] flex items-center gap-[3px]">
            <Eye /><Down className="fill-[#b8b8b8]" />
          </button>
        </div>

        <Section title="Variable">
          <Row label="Variable Name" id="v-name" height="h-[22px]"><TextBox id="v-name" value="GunnerGirlComponent" width="w-[125px]" /></Row>
          <Row label="Tooltip" id="v-tip" height="h-[22px]"><TextBox id="v-tip" value="" width="w-[125px]" /></Row>
          <Row label="Category" id="v-cat" height="h-[26px]">
            <div className="relative ml-px flex items-center">
              <select id="v-cat" className="h-[20px] w-[123px] appearance-none border border-[#4c4c4c] bg-[linear-gradient(90deg,#878787_100px,#747474_100px)] pl-[5px] text-[11px] text-[#2b2b2b]"><option>Default</option></select>
              <Down className="pointer-events-none absolute right-[8px] fill-[#222]" />
            </div>
          </Row>
          <Row label="Editable when Inherited" id="v-edit"><Check id="v-edit" on /></Row>
        </Section>

        <Section title="Sockets">
          <Row label="Parent Socket" id="s-parent" height="h-[28px]">
            <ReadOnly id="s-parent" value="None" size="h-[21px] w-[75px]" />
            <button type="button" aria-label="Browse sockets" className="ml-[7px]"><Magnifier size={12} className="stroke-[#bdbdbd]" /></button>
            <button type="button" aria-label="Clear socket" className="ml-[12px]">
              <svg width="11" height="12" viewBox="0 0 11 12" aria-hidden="true"><path d="M1.500 1.500L9.500 10.500M9.500 1.500L1.500 10.500" stroke="#e8e8e8" strokeWidth="3" /></svg>
            </button>
          </Row>
          <Row label="Left Gun Socket Name" id="s-lg"><TextBox id="s-lg" value="Weapon_L" width="w-[230px]" /></Row>
          <Row label="Right Gun Socket Name" id="s-rg"><TextBox id="s-rg" value="Weapon_R" width="w-[230px]" /></Row>
          <Row label="Left Holster Socket Name" id="s-lh"><TextBox id="s-lh" value="Holster_L" width="w-[230px]" /></Row>
          <Row label="Right Holster Socket Name" id="s-rh"><TextBox id="s-rh" value="Holster_R" width="w-[230px]" /></Row>
        </Section>

        <Section title="Default">
          <Row label="On Gun Mode Changed" id="d-gun"><ReadOnly id="d-gun" value="()" size="h-[15px] w-[103px]" /></Row>
          <Row label="On Strafe Mode Changed" id="d-strafe"><ReadOnly id="d-strafe" value="()" size="h-[15px] w-[103px]" /></Row>
          <Row label="Equipment Handler" id="d-eq" height="h-[79px]">
            <div className="ml-[5px] flex size-[64px] items-center justify-center border-b-[3px] border-white bg-[linear-gradient(#454545,#626262)] text-[10px] shadow-[0_0_3px_2px_#262626]">None</div>
            <div className="ml-[7px] flex flex-col gap-[6px] pb-[6px]">
              <div className="relative flex items-center">
                <select id="d-eq" className={`h-[19px] w-[170px] appearance-none rounded-[3px] bg-[#585858] pl-[2px] text-[12px] text-white ${shadow}`}><option>None</option></select>
                <Down className="pointer-events-none absolute right-[3px] fill-[#e0e0e0]" />
              </div>
              <div className="flex gap-[12px] pl-[6px]">
                <button type="button" aria-label="Use selected asset">
                  <svg width="12" height="12" viewBox="0 0 12 12" aria-hidden="true"><path d="M0 6L6 0.500V4H12V8H6V11.500Z" fill="#e8e8e8" /></svg>
                </button>
                <button type="button" aria-label="Browse to asset"><Magnifier size={12} className="stroke-[#bdbdbd]" /></button>
              </div>
            </div>
          </Row>
          <Row label="On Left Gun Shot" id="d-ls"><ReadOnly id="d-ls" value="()" size="h-[15px] w-[103px]" /></Row>
          <Row label="On Right Gun Shot" id="d-rs"><ReadOnly id="d-rs" value="()" size="h-[15px] w-[103px]" /></Row>
        </Section>

        <Section title="Crouch">
          <Row label="Is Crouching" id="c-is"><Check id="c-is" /></Row>
          <Row label="Is Crouch Pressed" id="c-pr"><Check id="c-pr" /></Row>
        </Section>

        <Section title="Movement">
          <Row label="Movement Axis X" id="m-x"><NumberBox id="m-x" width="w-[105px]" /></Row>
          <Row label="Movement Axis Y" id="m-y"><NumberBox id="m-y" width="w-[105px]" /></Row>
          <Row label="Is Movement Enabled" id="m-en"><Check id="m-en" on /></Row>
          <Row label="Velocity" id="m-v" height="h-[26px]" expand><Vector id="m-v" name="Velocity" /></Row>
          <Row label="Speed" id="m-s"><NumberBox id="m-s" width="w-[105px]" /></Row>
          <Row label="Forward Speed" id="m-f"><NumberBox id="m-f" width="w-[105px]" /></Row>
          <Row label="Sideward Speed" id="m-w"><NumberBox id="m-w" width="w-[105px]" /></Row>
        </Section>

        <Section title="Network">
          <Row label="Character Active Rotation" id="n-r" height="h-[26px]" expand><Vector id="n-r" name="Character Active Rotation" /></Row>
        </Section>

        <Section title="Jump">
          <Row label="Is in Air" id="j-air"><Check id="j-air" /></Row>
          <Row label="Anim Is Double Jump Ready" id="j-dj"><Check id="j-dj" /></Row>
        </Section>
      </div>

      <div className="absolute top-[50px] right-[5px] h-[384px] w-[10px] bg-white" />
      <div className="absolute top-[173px] right-[7px] z-10 h-[161px] w-[474px] border-4 border-[#ffe04c]" />
      <svg width="118" height="85" viewBox="0 0 118 85" className="absolute top-[220px] -left-[163px] z-10" aria-hidden="true">
        <path d="M0 24H75V0L118 42.500L75 85V61H0Z" fill="#ffe04c" />
      </svg>
    </section>
  );
}

/* ---------- page ---------- */

export default function App() {
  return (
    <div className="flex h-screen flex-col overflow-hidden bg-[#222] font-['Roboto',sans-serif]">
      <TitleBar />
      <MenuBar />
      <main className="flex min-h-0 flex-1 gap-[5px] px-px pt-px pb-[3px]">
        <div className="flex w-[386px] shrink-0 flex-col gap-[6px]">
          <ComponentsPanel />
          <MyBlueprintPanel />
        </div>
        <div className="flex min-w-0 flex-1 flex-col gap-[5px]">
          <ToolbarPanel />
          <GraphPanel />
          <ResultsPanel />
        </div>
        <DetailsPanel />
      </main>
    </div>
  );
}
